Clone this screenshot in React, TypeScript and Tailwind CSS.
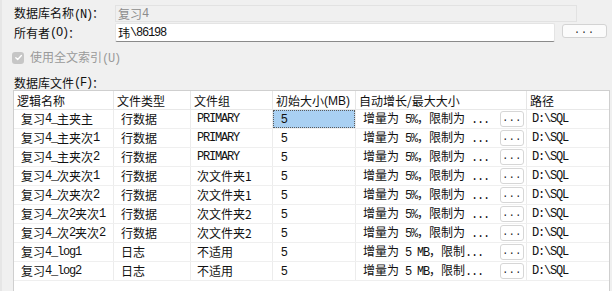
const cjk = "font-['Noto_Sans_CJK_SC',sans-serif]";

function Mix({ t }: { t: string }) {
  return (
    <>
      {t.split(/([\x00-\x7f]+)/).map((s, i) =>
        /^[\x00-\x7f]+$/.test(s) ? (
          <span key={i} className="font-['Liberation_Mono',monospace] text-[12px] tracking-[-1.2px]">
            {s}
          </span>
        ) : (
          <span key={i}>{s}</span>
        )
      )}
    </>
  );
}

const rows = [
  ["复习4_主夹主", "行数据", "PRIMARY", "增量为 5%，限制为 ..."],
  ["复习4_主夹次1", "行数据", "PRIMARY", "增量为 5%，限制为 ..."],
  ["复习4_主夹次2", "行数据", "PRIMARY", "增量为 5%，限制为 ..."],
  ["复习4_次夹次1", "行数据", "次文件夹1", "增量为 5%，限制为 ..."],
  ["复习4_次夹次2", "行数据", "次文件夹1", "增量为 5%，限制为 ..."],
  ["复习4_次2夹次1", "行数据", "次文件夹2", "增量为 5%，限制为 ..."],
  ["复习4_次2夹次2", "行数据", "次文件夹2", "增量为 5%，限制为 ..."],
  ["复习4_log1", "日志", "不适用", "增量为 5 MB，限制..."],
  ["复习4_log2", "日志", "不适用", "增量为 5 MB，限制..."],
];

const headers = ["逻辑名称", "文件类型", "文件组", "初始大小(MB)", "自动增长/最大大小", "路径"];

export default function App() {
  return (
    <div className={`w-[612px] h-[291px] overflow-hidden bg-[#f0f0f0] border-l-2 border-[#e6e6e6] pl-[10px] pr-[4px] text-[12px] text-[#111] ${cjk}`}>
      {/* 数据库名称 */}
      <div className="flex items-center mt-[5px] h-[17px]">
        <div className="w-[103px] pl-[2px] leading-none">
          <Mix t="数据库名称(N)：" />
        </div>
        <div className="w-[462px] h-[17px] border border-[#e2e2e2] pl-[2px] flex items-center text-[#8c8c8c] leading-none">
          <Mix t="复习4" />
        </div>
      </div>

      {/* 所有者 */}
      <div className="flex items-start mt-[1px] h-[19px]">
        <div className="w-[103px] pl-[2px] h-[19px] flex items-center leading-none">
          <Mix t="所有者(O)：" />
        </div>
        <div className="w-[440px] h-[19px] bg-white border border-[#e4e4e4] border-b-[#8a8a8a] rounded-[2px] pl-[2px] flex items-center leading-none">
          <Mix t="玮\86198" />
        </div>
        <button className="ml-[7px] mt-[1px] w-[45px] h-[14px] bg-[#fbfbfb] border border-[#d3d3d3] rounded-[3px] flex items-center justify-center leading-none">
          <span className="font-['Liberation_Mono',monospace] text-[10px] tracking-[1px] text-[#222] -mt-[1px]">...</span>
        </button>
      </div>

      {/* 全文索引 */}
      <div className="flex items-center mt-[9px] h-[13px] text-[#9a9a9a]">
        <div className="w-[12px] h-[12px] rounded-[3px] bg-[#c6c6c6] flex items-center justify-center">
          <svg width="9" height="9" viewBox="0 0 10 10" fill="none">
            <path d="M2 5.2 4.1 7.3 8.2 2.8" stroke="#fff" strokeWidth="1.5" strokeLinecap="round" strokeLinejoin="round" />
          </svg>
        </div>
        <div className="ml-[6px] leading-none">
          <Mix t="使用全文索引(U)" />
        </div>
      </div>

      {/* 数据库文件 */}
      <div className="mt-[12px] h-[13px] pl-[2px] flex items-center leading-none">
        <Mix t="数据库文件(F)：" />
      </div>

      <div className="mt-[1px] ml-[1px] w-[597px] h-[210px] bg-white border border-[#cfcfcf] border-b-0">
        <div className="grid grid-cols-[100px_77px_82px_83px_171px_82px] h-[19px] border-b border-[#e8e8e8]">
          {headers.map((h, i) => (
            <div
              key={h}
              className={`h-[19px] flex items-center pl-[3px] leading-none ${i < 5 ? "border-r border-[#e6e6e6]" : ""} ${i === 3 ? "font-['Liberation_Sans','Noto_Sans_CJK_SC',sans-serif]" : ""}`}
            >
              {i === 3 ? (
                <>
                  <span className={cjk}>初始大小</span>
                  <span className="text-[12px]">(MB)</span>
                </>
              ) : (
                h
              )}
            </div>
          ))}
        </div>
        {rows.map((r, ri) => (
          <div key={ri} className="grid grid-cols-[100px_77px_82px_83px_171px_82px] h-[19px] border-b border-[#efefef]">
            <div className="border-r border-[#ececec] pl-[7px] flex items-center leading-none">
              <Mix t={r[0]} />
            </div>
            <div className="border-r border-[#ececec] pl-[7px] flex items-center leading-none">{r[1]}</div>
            <div className="border-r border-[#ececec] pl-[6px] flex items-center leading-none">
              {r[2] === "PRIMARY" ? <Mix t={r[2]} /> : r[2]}
            </div>
            <div className="border-r border-[#ececec] flex items-center leading-none">
              {ri === 0 ? (
                <div className="w-[82px] h-[18px] bg-[#a9d0f2] border border-dotted border-[#5a5a5a] pl-[7px] flex items-center font-['Liberation_Sans',sans-serif]">
                  5
                </div>
              ) : (
                <span className="pl-[8px] font-['Liberation_Sans',sans-serif]">5</span>
              )}
            </div>
            <div className="border-r border-[#ececec] pl-[7px] flex items-center leading-none">
              <div className="w-[137px]">
                <Mix t={r[3]} />
              </div>
              <div className="w-[24px] h-[16px] bg-white border border-[#d6d6d6] rounded-[3px] flex items-center justify-center">
                <span className="font-['Liberation_Mono',monospace] text-[10px] tracking-[0.5px]">...</span>
              </div>
            </div>
            <div className="pl-[5px] flex items-center leading-none">
              <Mix t="D:\SQL" />
            </div>
          </div>
        ))}
      </div>
    </div>
  );
}
